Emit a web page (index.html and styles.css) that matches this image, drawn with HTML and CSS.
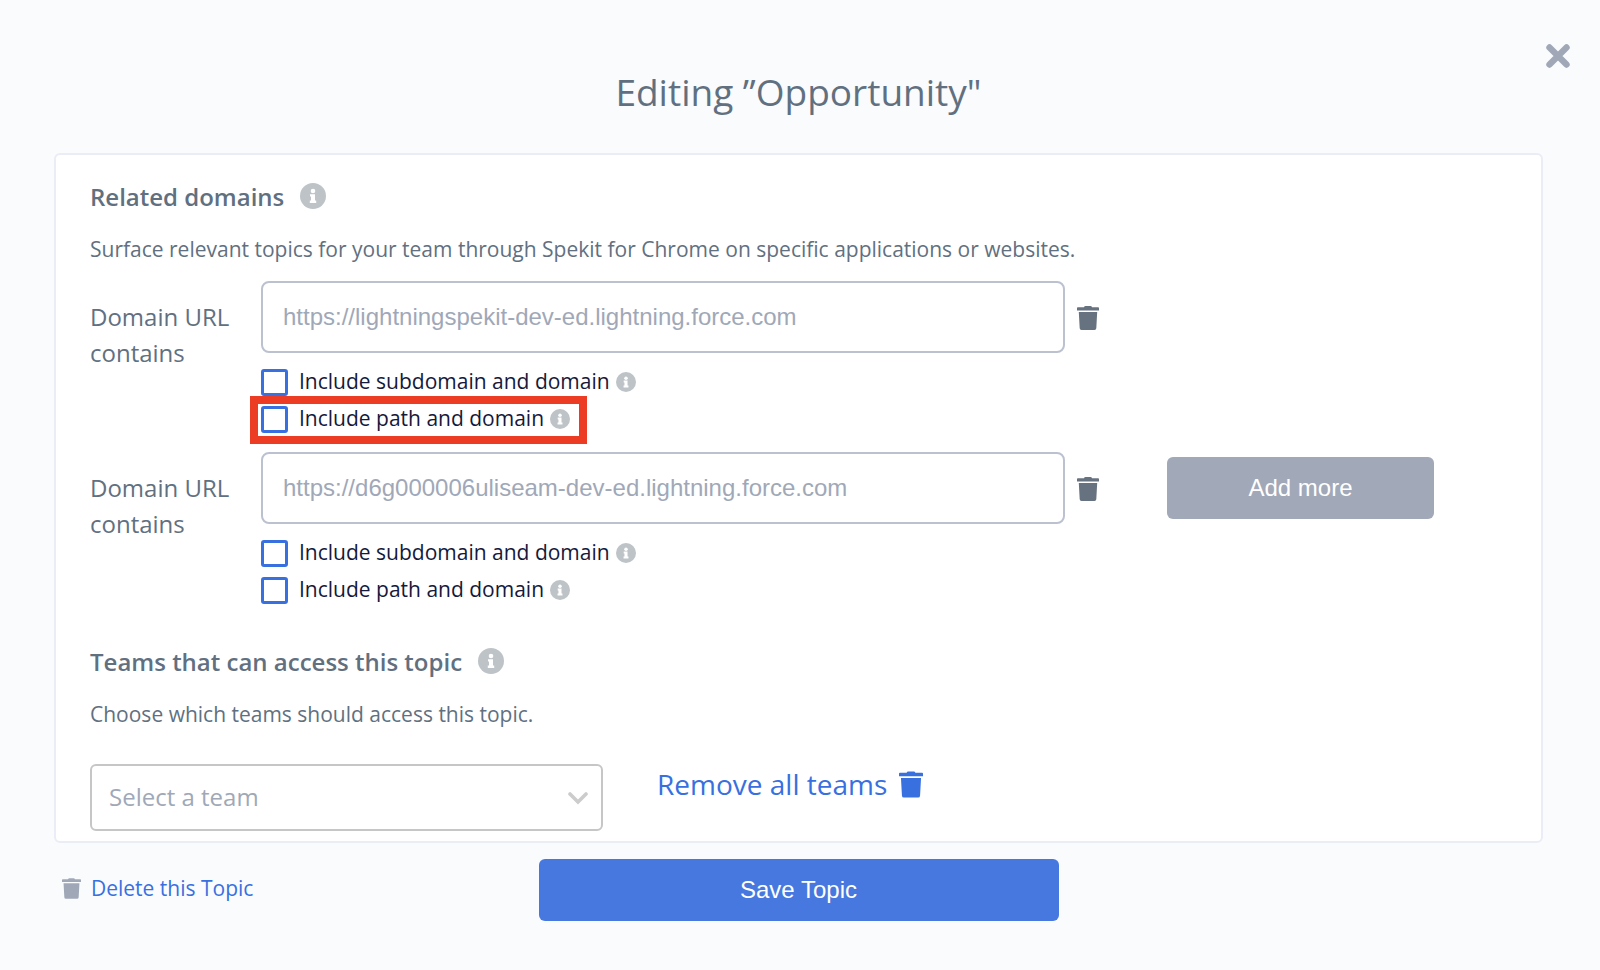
FILE: index.html
```html
<!DOCTYPE html>
<html lang="en">
<head>
  <meta charset="UTF-8">
  <title>Editing Topic</title>
  <link rel="stylesheet" href="styles.css">
</head>
<body>
  <svg class="sprite" aria-hidden="true">
    <symbol id="icon-info" viewBox="0 0 26 26">
      <circle cx="13" cy="13" r="13" fill="#bdc3c7"/>
      <circle cx="13" cy="8" r="2.3" fill="#fff"/>
      <path d="M10 11.2h5v6.4h1.2v2.4H9.8v-2.4H11v-4h-1z" fill="#fff"/>
    </symbol>
    <symbol id="icon-trash" viewBox="0 0 22 24">
      <path d="M7 1.3Q7.3 0 8.5 0h5q1.200 0 1.500 1.300h6.200q.8 0 .8.8V4.500H0V2.100q0-.8.8-.8zM1.800 6h18.400l-.9 16.200q-.1 1.800-1.800 1.800h-13q-1.700 0-1.800-1.800z" fill="currentColor"/>
    </symbol>
  </svg>

  <div class="modal">
    <header class="header">
      <h1>Editing ”Opportunity"</h1>
      <button class="close" type="button" aria-label="Close">
        <svg width="24" height="24" viewBox="0 0 24 24"><path d="M3.500 3.500l17 17M20.500 3.500l-17 17" stroke="currentColor" stroke-width="6.400" stroke-linecap="round"/></svg>
      </button>
    </header>

    <main class="card">
      <section>
        <h2>Related domains <svg class="info-lg"><use href="#icon-info"/></svg></h2>
        <p>Surface relevant topics for your team through Spekit for Chrome on specific applications or websites.</p>

        <div class="domain">
          <label class="domain-label" for="url1">Domain URL contains</label>
          <input class="url" id="url1" type="text" placeholder="https://lightningspekit-dev-ed.lightning.force.com">
          <button class="trash" type="button" aria-label="Remove domain"><svg width="22" height="24"><use href="#icon-trash"/></svg></button>
          <div class="options">
            <label class="option"><input type="checkbox"><span>Include subdomain and domain</span><svg class="info-sm"><use href="#icon-info"/></svg></label>
            <label class="option highlight"><input type="checkbox"><span>Include path and domain</span><svg class="info-sm"><use href="#icon-info"/></svg></label>
          </div>
        </div>

        <div class="domain">
          <label class="domain-label" for="url2">Domain URL contains</label>
          <input class="url" id="url2" type="text" placeholder="https://d6g000006uliseam-dev-ed.lightning.force.com">
          <button class="trash" type="button" aria-label="Remove domain"><svg width="22" height="24"><use href="#icon-trash"/></svg></button>
          <button class="btn add" type="button">Add more</button>
          <div class="options">
            <label class="option"><input type="checkbox"><span>Include subdomain and domain</span><svg class="info-sm"><use href="#icon-info"/></svg></label>
            <label class="option"><input type="checkbox"><span>Include path and domain</span><svg class="info-sm"><use href="#icon-info"/></svg></label>
          </div>
        </div>
      </section>

      <section class="teams">
        <h2>Teams that can access this topic <svg class="info-lg"><use href="#icon-info"/></svg></h2>
        <p>Choose which teams should access this topic.</p>
        <div class="team-row">
          <div class="select">
            <select aria-label="Select a team"><option>Select a team</option></select>
            <svg class="chevron" width="20" height="13" viewBox="0 0 20 13"><path d="M2 2l8 8 8-8" fill="none" stroke="#ccc" stroke-width="3.600" stroke-linecap="round"/></svg>
          </div>
          <a class="remove" href="#">Remove all teams <svg width="24" height="27"><use href="#icon-trash"/></svg></a>
        </div>
      </section>
    </main>

    <footer class="footer">
      <a class="delete" href="#"><svg width="19" height="21"><use href="#icon-trash"/></svg>Delete this Topic</a>
      <button class="btn save" type="button">Save Topic</button>
    </footer>
  </div>
</body>
</html>
```
FILE: styles.css
```css
* { box-sizing: border-box; }
body { margin: 0; background: #fafbfd; color: #617080; font-family: "Open Sans", "Noto Sans", sans-serif; }
button { border: 0; padding: 0; background: none; cursor: pointer; }
a { color: #3870e0; text-decoration: none; }
svg { display: block; flex: none; }
.sprite { position: absolute; width: 0; height: 0; }

.modal { padding: 0 57px 0 54px; }
.header { position: relative; padding: 67px 0 36px; text-align: center; }
h1 { margin: 0; font-size: 37px; line-height: 50px; font-weight: 400; }
.close { position: absolute; top: 44px; right: -27px; color: #a0a8b8; }

.card { padding: 24px 34px 10px; background: #fff; border: 2px solid #eaedf6; border-radius: 6px; }
h2 { display: flex; align-items: center; gap: 16px; margin: 0; font-size: 24px; line-height: 36px; font-weight: 600; }
p { margin: 18px 0 0; font-size: 21px; line-height: 32px; }
.info-lg { width: 26px; height: 26px; margin-bottom: 2px; }
.info-sm { width: 20px; height: 20px; margin-left: 6px; margin-bottom: 2px; }

.domain { display: grid; grid-template-columns: 159px 1fr 22px 396px; column-gap: 12px; height: 171px; grid-template-rows: 72px 1fr; align-items: center; }
p + .domain { margin-top: 16px; }
.domain-label { align-self: start; height: 72px; padding-top: 18px; font-size: 24px; line-height: 36px; }
.url { width: 100%; height: 72px; padding: 0 20px; border: 2px solid #bcc1d0; border-radius: 8px; background: #fff; font: 24px "Liberation Sans", Arial, sans-serif; color: #617080; }
.url::placeholder { color: #a0a8b8; opacity: 1; }
.trash { padding-top: 2px; color: #677280; }
.btn { height: 62px; border-radius: 6px; color: #fff; font: 24px "Liberation Sans", Arial, sans-serif; }
.add { width: 267px; margin-left: 56px; background: #a1a8b7; }
.options { grid-column: 2; grid-row: 2; align-self: start; padding-top: 11px; }
.option { position: relative; display: flex; align-items: center; width: fit-content; height: 37px; color: #15193b; font-size: 21px; }
.option span { padding-bottom: 3px; }
.option input { appearance: none; width: 27px; height: 27px; margin: 0 11px 0 0; border: 3px solid #3870e0; border-radius: 3px; background: #fff; }
.highlight::after { content: ""; position: absolute; inset: -5px -17px -6px -11px; border: 8px solid #ec3d24; }

.teams { margin-top: 21px; }
.team-row { display: flex; align-items: flex-start; gap: 54px; margin-top: 34px; }
.select { position: relative; width: 513px; }
select { appearance: none; width: 100%; height: 67px; padding: 0 17px 2px; border: 2px solid #c6c6c6; border-radius: 6px; background: #fff; color: #a0a8b8; font: 24px "Open Sans", "Noto Sans", sans-serif; }
.chevron { position: absolute; right: 15px; top: 28px; pointer-events: none; }
.remove { display: flex; align-items: center; gap: 12px; font-size: 28px; line-height: 40px; }

.footer { display: grid; grid-template-columns: 1fr 520px 1fr; align-items: center; margin-top: 16px; }
.delete { display: flex; align-items: center; gap: 10px; padding: 0 0 4px 8px; font-size: 21px; }
.delete svg { color: #a0a8b8; }
.save { background: #4678df; }
```
